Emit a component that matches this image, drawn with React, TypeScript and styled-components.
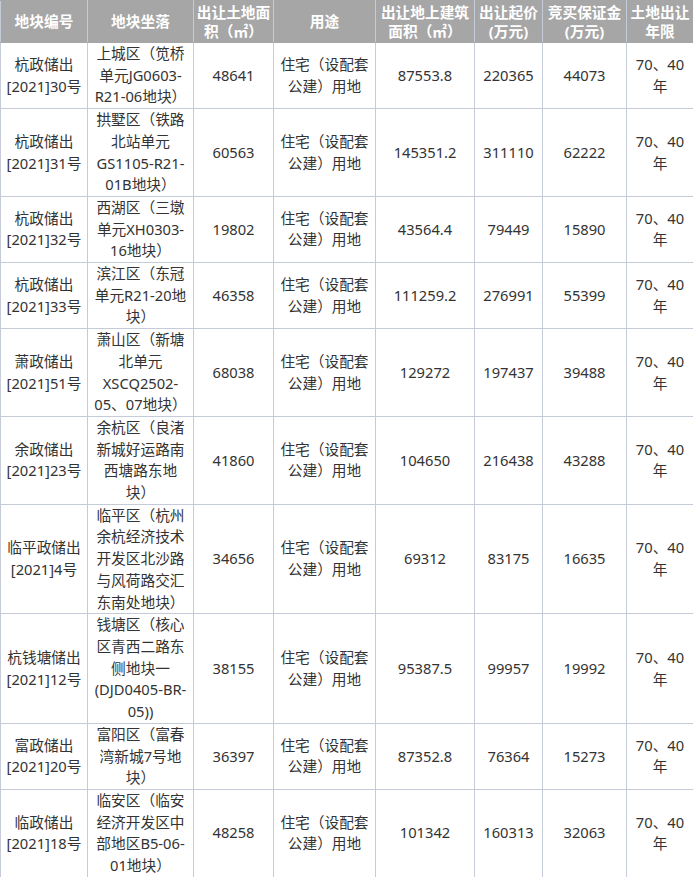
import React from 'react';
import styled, { createGlobalStyle } from 'styled-components';

const GlobalStyle = createGlobalStyle`
    html, body {
        margin: 0;
        padding: 0;
        background: #ffffff;
    }
`;

const Table = styled.table`
    width: 693px;
    table-layout: fixed;
    border-collapse: collapse;
    font-family: 'Noto Sans', 'Noto Sans CJK SC', sans-serif;
    font-size: 14.7px;
    color: #333333;
`;

const HeadCell = styled.th`
    background: #a6a6a6;
    color: #ffffff;
    font-weight: 700;
    line-height: 19px;
    height: 41px;
    padding: 0 2px;
    text-align: center;
    vertical-align: middle;
    border: 1px solid #a6a6a6;
    border-left-color: #c5cbd8;
    border-right-color: #c5cbd8;
    white-space: nowrap;
`;

const Cell = styled.td`
    line-height: 21.7px;
    padding: 0 2px;
    text-align: center;
    vertical-align: middle;
    border: 1px solid #c5cbd8;
    white-space: nowrap;
`;

const Lines = ({ lines }: { lines: string[] }) => (
    <>
        {lines.map((line, i) => (
            <React.Fragment key={i}>
                {i > 0 && <br />}
                {line}
            </React.Fragment>
        ))}
    </>
);

const widths = [87, 106, 80, 102, 99, 68, 84, 67];

const headers: string[][] = [
    ['地块编号'],
    ['地块坐落'],
    ['出让土地面', '积（㎡）'],
    ['用途'],
    ['出让地上建筑', '面积（㎡）'],
    ['出让起价', '(万元)'],
    ['竞买保证金', '(万元)'],
    ['土地出让', '年限'],
];

interface Plot {
    code: string[];
    place: string[];
    area: string;
    build: string;
    price: string;
    deposit: string;
}

const plots: Plot[] = [
    { code: ['杭政储出', '[2021]30号'], place: ['上城区（笕桥', '单元JG0603-', 'R21-06地块）'], area: '48641', build: '87553.8', price: '220365', deposit: '44073' },
    { code: ['杭政储出', '[2021]31号'], place: ['拱墅区（铁路', '北站单元', 'GS1105-R21-', '01B地块）'], area: '60563', build: '145351.2', price: '311110', deposit: '62222' },
    { code: ['杭政储出', '[2021]32号'], place: ['西湖区（三墩', '单元XH0303-', '16地块）'], area: '19802', build: '43564.4', price: '79449', deposit: '15890' },
    { code: ['杭政储出', '[2021]33号'], place: ['滨江区（东冠', '单元R21-20地', '块）'], area: '46358', build: '111259.2', price: '276991', deposit: '55399' },
    { code: ['萧政储出', '[2021]51号'], place: ['萧山区（新塘', '北单元', 'XSCQ2502-', '05、07地块）'], area: '68038', build: '129272', price: '197437', deposit: '39488' },
    { code: ['余政储出', '[2021]23号'], place: ['余杭区（良渚', '新城好运路南', '西塘路东地', '块）'], area: '41860', build: '104650', price: '216438', deposit: '43288' },
    { code: ['临平政储出', '[2021]4号'], place: ['临平区（杭州', '余杭经济技术', '开发区北沙路', '与风荷路交汇', '东南处地块）'], area: '34656', build: '69312', price: '83175', deposit: '16635' },
    { code: ['杭钱塘储出', '[2021]12号'], place: ['钱塘区（核心', '区青西二路东', '侧地块一', '(DJD0405-BR-', '05))'], area: '38155', build: '95387.5', price: '99957', deposit: '19992' },
    { code: ['富政储出', '[2021]20号'], place: ['富阳区（富春', '湾新城7号地', '块）'], area: '36397', build: '87352.8', price: '76364', deposit: '15273' },
    { code: ['临政储出', '[2021]18号'], place: ['临安区（临安', '经济开发区中', '部地区B5-06-', '01地块）'], area: '48258', build: '101342', price: '160313', deposit: '32063' },
];

const App = (): JSX.Element => (
    <>
        <GlobalStyle />
        <Table>
            <colgroup>
                {widths.map((w, i) => (
                    <col key={i} style={{ width: w }} />
                ))}
            </colgroup>
            <thead>
                <tr>
                    {headers.map((h, i) => (
                        <HeadCell key={i}>
                            <Lines lines={h} />
                        </HeadCell>
                    ))}
                </tr>
            </thead>
            <tbody>
                {plots.map((p) => (
                    <tr key={p.code.join('')}>
                        <Cell><Lines lines={p.code} /></Cell>
                        <Cell><Lines lines={p.place} /></Cell>
                        <Cell>{p.area}</Cell>
                        <Cell><Lines lines={['住宅（设配套', '公建）用地']} /></Cell>
                        <Cell>{p.build}</Cell>
                        <Cell>{p.price}</Cell>
                        <Cell>{p.deposit}</Cell>
                        <Cell><Lines lines={['70、40', '年']} /></Cell>
                    </tr>
                ))}
            </tbody>
        </Table>
    </>
);

export default App;
